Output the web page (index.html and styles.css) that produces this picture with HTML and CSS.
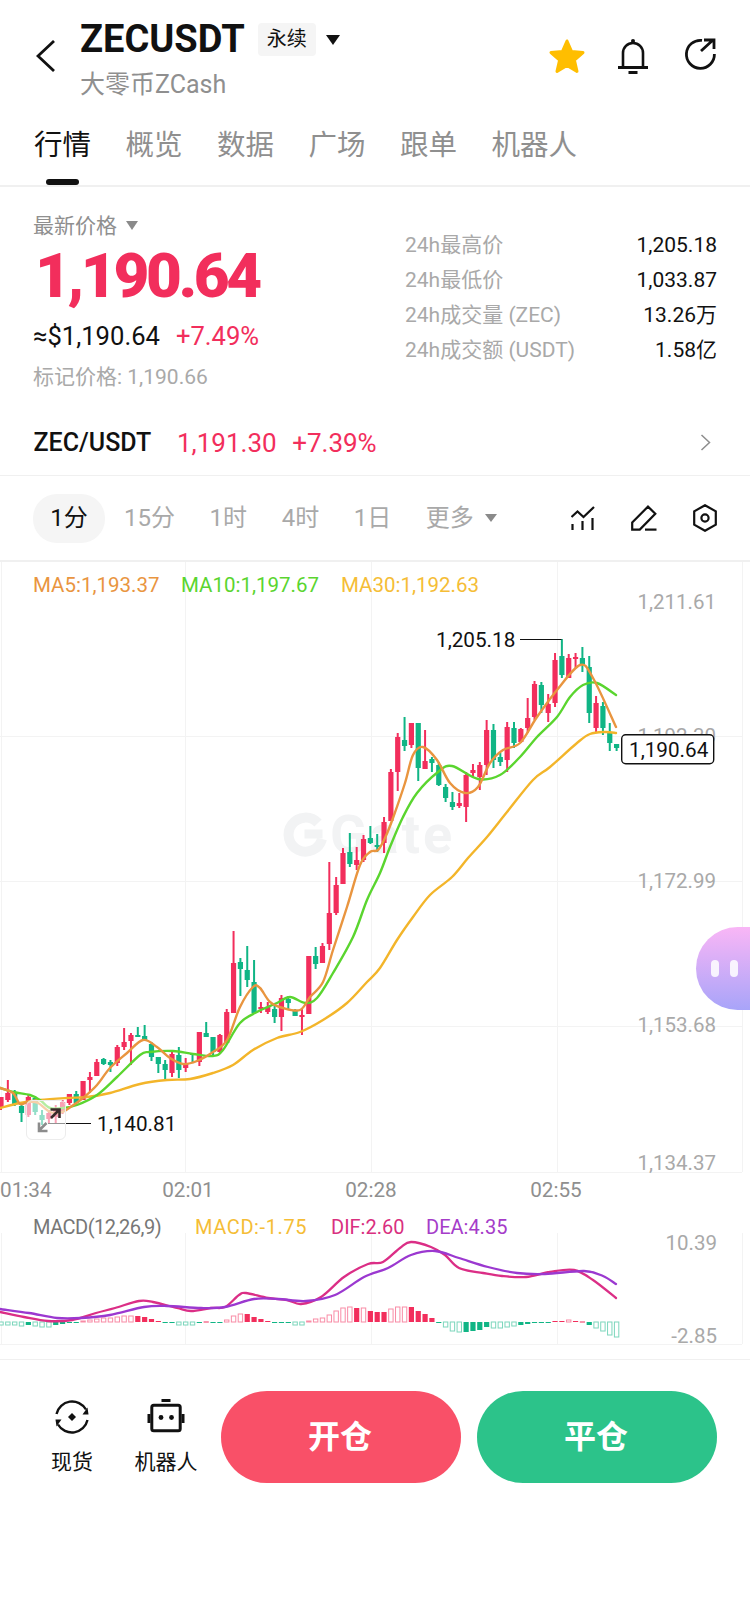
FILE: index.html
```html
<!DOCTYPE html>
<html lang="zh-CN">
<head>
    <meta charset="utf-8">
    <title>ZECUSDT</title>
    <link rel="stylesheet" href="styles.css">
</head>
<body>

<header class="topbar">
    <svg class="back" width="20" height="32" viewBox="0 0 20 32">
        <polyline points="18,1 2,16 18,31" fill="none" stroke="#111" stroke-width="2.8"/>
    </svg>
    <div class="symbol">
        <div class="symbol-row">
            <span class="symbol-name">ZECUSDT</span>
            <span class="badge">永续</span>
            <span class="tri tri-dark"></span>
        </div>
        <div class="symbol-sub">大零币ZCash</div>
    </div>
    <div class="top-icons">
        <svg width="38" height="36" viewBox="0 0 38 36">
            <polygon points="19,3 23.6,13.6 35,14.6 26.4,22.2 29,33.4 19,27.5 9,33.4 11.6,22.2 3,14.6 14.4,13.6" fill="#ffbe00" stroke="#ffbe00" stroke-width="3" stroke-linejoin="round"/>
        </svg>
        <svg class="bell" width="32" height="36" viewBox="0 0 32 36">
            <circle cx="16" cy="3" r="2" fill="#111"/>
            <path d="M6 29V15a10 10 0 0 1 20 0V29" fill="none" stroke="#111" stroke-width="2.6"/>
            <path d="M1 29.5H31" stroke="#111" stroke-width="3"/>
            <rect x="11.5" y="33" width="9" height="3" fill="#111"/>
        </svg>
        <svg width="32" height="32" viewBox="0 0 32 32">
            <path d="M18 2.4A14 14 0 1 0 30.4 16" fill="none" stroke="#111" stroke-width="2.8"/>
            <path d="M17 13L29 2M20 2H30V11" fill="none" stroke="#111" stroke-width="2.8"/>
        </svg>
    </div>
</header>

<nav class="tabs">
    <span class="tab active">行情</span>
    <span class="tab">概览</span>
    <span class="tab">数据</span>
    <span class="tab">广场</span>
    <span class="tab">跟单</span>
    <span class="tab">机器人</span>
</nav>

<section class="stats">
    <div class="stats-left">
        <div class="price-label">最新价格 <span class="tri tri-gray"></span></div>
        <div class="price">1,190.64</div>
        <div class="approx">≈$1,190.64<span class="up approx-pct">+7.49%</span></div>
        <div class="mark">标记价格: 1,190.66</div>
    </div>
    <div class="stats-right">
        <div class="stat-row"><span>24h最高价</span><b>1,205.18</b></div>
        <div class="stat-row"><span>24h最低价</span><b>1,033.87</b></div>
        <div class="stat-row"><span>24h成交量 (ZEC)</span><b>13.26万</b></div>
        <div class="stat-row"><span>24h成交额 (USDT)</span><b>1.58亿</b></div>
    </div>
</section>

<section class="pair">
    <span class="pair-name">ZEC/USDT</span>
    <span class="up pair-price">1,191.30</span>
    <span class="up pair-pct">+7.39%</span>
    <svg class="pair-arrow" width="11" height="17" viewBox="0 0 11 17">
        <polyline points="1.5,1 9.5,8.5 1.5,16" fill="none" stroke="#8d8d8d" stroke-width="1.5"/>
    </svg>
</section>

<section class="periods">
    <span class="period active">1分</span>
    <span class="period">15分</span>
    <span class="period">1时</span>
    <span class="period">4时</span>
    <span class="period">1日</span>
    <span class="period">更多</span>
    <span class="tri tri-gray"></span>
    <div class="tools">
        <svg width="24" height="24" viewBox="0 0 24 24" fill="none" stroke="#111" stroke-width="2.2">
            <polyline points="0.5,11 6.5,5.5 12.5,11 23,1"/>
            <path d="M1.5 18V24M11.5 15V24M21.5 12V24"/>
        </svg>
        <svg width="26" height="26" viewBox="0 0 26 26" fill="none" stroke="#111" stroke-width="2.2">
            <path d="M1.2 17.5L17 1.6 24.3 8.8 8.8 24.6H1.2Z"/>
            <path d="M14 24.6H25.5"/>
        </svg>
        <svg width="24" height="28" viewBox="0 0 24 28" fill="none" stroke="#111" stroke-width="2.2">
            <polygon points="12,1.2 22.8,7.4 22.8,20.6 12,26.8 1.2,20.6 1.2,7.4"/>
            <circle cx="12" cy="14" r="3.6"/>
        </svg>
    </div>
</section>

<section class="chart">
    <svg id="chart" class="chart-svg" width="750" height="797" viewBox="0 562 750 797">
        <g id="grid" stroke="#f3f3f3" stroke-width="1"></g>
        <g class="watermark">
            <path d="M318 823A17 17 0 1 0 322 839" fill="none" stroke-width="10"/>
            <rect x="305" y="830" width="17" height="8"/>
            <text x="330" y="853">Gate</text>
        </g>
        <g class="axis">
            <text x="716" y="609">1,211.61</text>
            <text x="716" y="743">1,192.30</text>
            <text x="716" y="888">1,172.99</text>
            <text x="716" y="1032">1,153.68</text>
            <text x="716" y="1170">1,134.37</text>
            <text x="717" y="1250">10.39</text>
            <text x="717" y="1343">-2.85</text>
        </g>
        <g id="candles"></g>
        <g id="lines" fill="none" stroke-width="2.4" stroke-linejoin="round" stroke-linecap="round"></g>
        <g id="hist"></g>
        <g id="macd" fill="none" stroke-width="2.3" stroke-linejoin="round" stroke-linecap="round"></g>

        <g class="legend">
            <text x="33" y="592" fill="#e9953f">MA5:1,193.37</text>
            <text x="181" y="592" fill="#5ad52f">MA10:1,197.67</text>
            <text x="341" y="592" fill="#f5bd36">MA30:1,192.63</text>
        </g>
        <g class="marker">
            <text x="436" y="647">1,205.18</text>
            <path d="M520 639.5H561.5" stroke="#111" stroke-width="1.2"/>
            <text x="97" y="1131">1,140.81</text>
            <path d="M48 1123.5H91" stroke="#111" stroke-width="1.2"/>
        </g>
        <rect class="price-tag" x="621.7" y="734.7" width="92" height="29" rx="4"/>
        <text class="price-tag-text" x="629" y="757">1,190.64</text>

        <g class="times">
            <text x="0" y="1197">01:34</text>
            <text x="188" y="1197" text-anchor="middle">02:01</text>
            <text x="371" y="1197" text-anchor="middle">02:28</text>
            <text x="556" y="1197" text-anchor="middle">02:55</text>
        </g>
        <g class="legend legend-macd">
            <text class="macd-name" x="33" y="1234" fill="#777">MACD(12,26,9)</text>
            <text class="macd-value" x="195" y="1234" fill="#f5bd36">MACD:-1.75</text>
            <text x="331" y="1234" fill="#d9307f">DIF:2.60</text>
            <text x="426" y="1234" fill="#a53cc9">DEA:4.35</text>
        </g>
    </svg>

    <div class="collapse">
        <svg width="26" height="26" viewBox="0 0 26 26">
            <path d="M9.5 16L2.5 23M2 15.5V24H10.5" fill="none" stroke="#8c8c8c" stroke-width="2.6"/>
            <path d="M14 11L22 3M13.5 2.5H22.5V11" fill="none" stroke="#3a2a2a" stroke-width="2.6"/>
        </svg>
    </div>
    <div class="bot-bubble"><i></i><i></i></div>
</section>

<footer class="actions">
    <div class="action">
        <svg width="36" height="36" viewBox="0 0 36 36" fill="none" stroke="#111" stroke-width="2.4">
            <path d="M2.5 15A16 16 0 0 1 32 10.5"/>
            <path d="M33.5 21A16 16 0 0 1 4 25.5"/>
            <path d="M28.5 15.5L34.5 15.5 33.5 8.5Z" fill="#111" stroke="none"/>
            <path d="M7.5 20.5L1.5 20.5 2.5 27.5Z" fill="#111" stroke="none"/>
            <path d="M18 14L22 18 18 22 14 18Z" fill="#111" stroke="none"/>
        </svg>
        <span>现货</span>
    </div>
    <div class="action action-bot">
        <svg width="38" height="36" viewBox="0 0 38 36">
            <rect x="14.5" y="0" width="9" height="3" fill="#111"/>
            <rect x="4.8" y="6.2" width="28.4" height="25.6" rx="2" fill="none" stroke="#111" stroke-width="3"/>
            <rect x="0.5" y="15" width="3" height="9" fill="#111"/>
            <rect x="34.5" y="15" width="3" height="9" fill="#111"/>
            <circle cx="14" cy="18.5" r="2.4" fill="#111"/>
            <circle cx="24.5" cy="18.5" r="2.4" fill="#111"/>
        </svg>
        <span>机器人</span>
    </div>
    <button class="btn btn-open">开仓</button>
    <button class="btn btn-close">平仓</button>
</footer>

<script src="chart.js"></script>
</body>
</html>
```

FILE: styles.css
```css
:root {
    --red: #f22e5c;
    --gray: #8f8f8f;
    --light: #a9a9a9;
    --line: #f0f0f0;
}

* {
    box-sizing: border-box;
}

html, body {
    margin: 0;
    padding: 0;
    background: #fff;
    color: #111;
    font-family: Roboto, "Noto Sans CJK SC", sans-serif;
}

body {
    width: 750px;
    height: 1604px;
    overflow: hidden;
    position: relative;
}

.up {
    color: var(--red);
}

.tri {
    display: inline-block;
    width: 0;
    height: 0;
    border-style: solid;
    border-color: transparent;
    border-bottom-width: 0;
}

.tri-dark {
    border-width: 10px 7px 0;
    border-top-color: #111;
    margin-left: 10px;
}

.tri-gray {
    border-width: 9px 6px 0;
    border-top-color: #8a8a8a;
}

/* top bar */
.topbar {
    height: 112px;
    display: flex;
    padding-left: 36px;
    position: relative;
}

.back {
    margin-top: 40px;
    flex: none;
}

.symbol {
    margin-left: 24px;
    padding-top: 20px;
}

.symbol-row {
    display: flex;
    align-items: center;
    height: 39px;
}

.symbol-name {
    font-size: 38px;
    font-weight: 700;
    line-height: 39px;
}

.badge {
    margin-left: 13px;
    width: 58px;
    height: 33px;
    background: #f5f5f5;
    border-radius: 4px;
    font-size: 20px;
    line-height: 33px;
    text-align: center;
}

.symbol-sub {
    margin-top: 11px;
    font-size: 25px;
    line-height: 30px;
    color: var(--gray);
}

.top-icons {
    margin-left: auto;
    margin-top: 38px;
    padding-right: 34px;
    display: flex;
    align-items: flex-start;
    gap: 33px;
}

.bell {
    margin: 0 2px 0 -2px;
}

/* tabs */
.tabs {
    height: 75px;
    padding: 16px 0 0 34px;
    display: flex;
    gap: 34.5px;
    border-bottom: 2px solid var(--line);
}

.tab {
    position: relative;
    font-size: 28.5px;
    line-height: 36px;
    height: 36px;
    color: var(--gray);
}

.tab.active {
    color: #111;
}

.tab.active::after {
    content: "";
    position: absolute;
    left: 12px;
    top: 51px;
    width: 33px;
    height: 6px;
    border-radius: 3px;
    background: #111;
}

/* price block */
.stats {
    height: 223px;
    padding: 24px 33px 0 33px;
    display: flex;
    justify-content: space-between;
}

.price-label {
    font-size: 21px;
    line-height: 30px;
    color: var(--gray);
}

.price-label .tri {
    margin-left: 4px;
    vertical-align: 3px;
}

.price {
    margin-left: 2px;
    font-size: 62px;
    font-weight: 900;
    letter-spacing: -3.4px;
    line-height: 70px;
    color: var(--red);
}

.approx {
    margin-top: 7px;
    font-size: 25.6px;
    line-height: 36px;
}

.approx-pct {
    margin-left: 16px;
}

.mark {
    margin-top: 8px;
    font-size: 21px;
    line-height: 30px;
    color: var(--light);
}

.stats-right {
    width: 312px;
    padding-top: 17px;
}

.stat-row {
    display: flex;
    justify-content: space-between;
    height: 35px;
    line-height: 35px;
    font-size: 21px;
}

.stat-row span {
    color: var(--light);
}

.stat-row b {
    font-weight: 400;
}

/* spot pair row */
.pair {
    height: 66px;
    padding: 0 39px 0 33.5px;
    display: flex;
    align-items: center;
    font-size: 26px;
    border-bottom: 1.5px solid var(--line);
}

.pair-name {
    width: 143.5px;
    font-size: 25px;
    font-weight: 500;
}

.pair-pct {
    margin-left: 15.5px;
}

.pair-arrow {
    margin-left: auto;
}

/* period picker */
.periods {
    height: 86px;
    padding: 0 33px;
    display: flex;
    align-items: center;
    gap: 34.6px;
    border-bottom: 2px solid var(--line);
}

.period {
    font-size: 24px;
    line-height: 34px;
    color: var(--light);
}

.period.active {
    width: 72px;
    height: 49px;
    margin-right: -15.6px;
    border-radius: 24px;
    background: #f5f5f5;
    line-height: 49px;
    text-align: center;
    color: #111;
}

.periods .tri {
    margin-left: -23.6px;
    border-width: 8px 6.5px 0;
}

.tools {
    margin-left: auto;
    display: flex;
    align-items: center;
    gap: 36px;
}

/* chart */
.chart {
    position: relative;
    height: 798px;
    border-bottom: 1.5px solid var(--line);
}

.chart-svg {
    display: block;
}

.chart-svg text {
    font-family: Roboto, sans-serif;
}

.watermark {
    fill: #f2f3f4;
    stroke: #f2f3f4;
}

.watermark text {
    stroke: none;
    font-size: 54px;
    font-weight: 700;
    letter-spacing: 3px;
}

.axis text {
    font-size: 20.5px;
    fill: var(--light);
    text-anchor: end;
}

.legend text {
    font-size: 20.5px;
}

.legend-macd text {
    font-size: 20px;
}

.legend-macd .macd-name {
    letter-spacing: -0.5px;
}

.legend-macd .macd-value {
    letter-spacing: 0.6px;
}

.marker text, .price-tag-text {
    font-size: 20.7px;
    fill: #111;
}

.price-tag {
    fill: #fff;
    stroke: #111;
    stroke-width: 1.4;
}

.times text {
    font-size: 20.7px;
    fill: var(--gray);
}

.collapse {
    position: absolute;
    left: 26px;
    top: 538px;
    width: 40px;
    height: 40px;
    padding: 7px;
    border: 1.5px solid #ececec;
    border-radius: 6px;
    background: rgba(255, 255, 255, 0.55);
}

.collapse svg {
    display: block;
    margin: -1px 0 0 3px;
}

.bot-bubble {
    position: absolute;
    right: 0;
    top: 365px;
    width: 54px;
    height: 83px;
    padding-left: 15px;
    display: flex;
    align-items: center;
    gap: 11px;
    border-radius: 42px 0 0 42px;
    background: linear-gradient(#f9b6f6, #a8a4f9);
}

.bot-bubble i {
    width: 8px;
    height: 17px;
    border-radius: 4px;
    background: rgba(255, 255, 255, 0.85);
}

/* bottom actions */
.actions {
    display: flex;
    align-items: flex-start;
    padding: 31px 33px 0 0;
}

.action {
    width: 40px;
    margin-left: 52px;
    display: flex;
    flex-direction: column;
    align-items: center;
    padding-top: 8px;
    font-size: 21px;
    line-height: 30px;
    white-space: nowrap;
}

.action span {
    margin-top: 12px;
}

.action svg {
    flex: none;
}

.action-bot {
    margin-left: 54px;
}

.btn {
    flex: none;
    width: 240px;
    height: 92px;
    padding: 0 2px 6px 0;
    border: 0;
    border-radius: 46px;
    color: #fff;
    font-family: inherit;
    font-size: 32px;
    font-weight: 700;
}

.btn-open {
    margin-left: 35px;
    background: #f95068;
}

.btn-close {
    margin-left: 16px;
    background: #2cc38a;
}
```

FILE: chart.js
```js
// Candles are [bodyTop, bodyBottom, high, low, isUp], already in page pixels
const CANDLES = [
    [1097,1107,1097,1110,1],[1093,1100,1080,1102,1],[1093,1105,1090,1106,0],[1106,1113,1102,1122,0],
    [1097,1115,1095,1117,1],[1098,1112,1096,1115,0],[1115,1120,1110,1125,0],[1113,1119,1110,1123,1],
    [1108,1117,1105,1123,1],[1102,1112,1100,1114,1],[1094,1103,1094,1105,1],[1094,1103,1091,1105,0],
    [1081,1100,1081,1100,1],[1077,1080,1072,1093,1],[1062,1076,1059,1076,1],[1059,1064,1058,1065,0],
    [1062,1065,1060,1072,0],[1047,1063,1045,1066,1],[1042,1047,1028,1050,1],[1035,1041,1033,1065,1],
    [1035,1037,1027,1037,0],[1036,1041,1025,1041,0],[1044,1057,1042,1061,0],[1057,1064,1057,1073,0],
    [1064,1070,1060,1080,0],[1054,1073,1050,1077,1],[1055,1070,1047,1078,0],[1063,1068,1058,1072,1],
    [1053,1055,1053,1063,0],[1032,1062,1032,1066,1],[1033,1037,1022,1037,0],[1037,1052,1037,1055,0],
    [1035,1052,1034,1053,1],[1012,1043,1009,1043,1],[963,1013,931,1013,1],[962,969,958,996,0],
    [970,980,946,987,0],[982,1013,960,1013,0],[1007,1009,1002,1013,1],[1007,1012,1002,1014,1],
    [1009,1017,1003,1023,0],[998,1017,995,1031,1],[999,1003,996,1010,0],[1010,1016,1009,1016,0],
    [1015,1017,1008,1035,1],[956,1014,956,1014,1],[956,964,947,969,0],[946,963,943,963,1],
    [913,944,862,950,1],[885,913,877,915,1],[853,884,848,884,1],[852,864,833,867,0],
    [860,865,847,870,1],[839,860,835,862,1],[838,843,826,844,0],[845,847,834,852,0],
    [822,843,817,853,1],[772,821,769,821,1],[737,772,733,791,1],[740,746,717,751,0],
    [723,745,723,748,1],[723,768,723,781,0],[761,769,730,769,1],[759,763,757,772,0],
    [765,785,762,786,0],[787,798,784,802,0],[802,807,792,810,0],[803,806,793,808,1],
    [775,807,772,822,1],[770,773,764,778,1],[765,777,762,790,1],[730,765,720,775,1],
    [730,760,724,768,0],[757,762,753,766,0],[727,760,722,772,1],[728,743,722,748,0],
    [729,742,728,743,1],[718,728,698,733,1],[684,717,681,720,1],[685,705,682,713,0],
    [704,713,694,722,1],[660,703,653,707,1],[656,675,639,678,0],[658,678,654,678,1],
    [657,659,653,668,1],[658,665,647,672,0],[667,713,656,723,0],[703,728,696,733,1],
    [706,728,702,735,0],[733,743,723,751,0],[744,748,744,751,0]
];

const MA5 = [[0,1088],[13,1093],[20,1104],[28,1102],[38,1103],[50,1112],[62,1112],[72,1106],[83,1098],[97,1085],[110,1068],[127,1053],[143,1040],[157,1047],[170,1058],[183,1064],[197,1061],[213,1052],[227,1040],[240,1007],[253,987],[260,988],[270,1002],[283,1008],[300,1010],[310,997],[323,982],[333,950],[347,907],[360,865],[370,852],[378,850],[385,838],[393,818],[405,783],[413,755],[423,747],[437,760],[450,783],[465,793],[478,787],[490,763],[503,750],[520,743],[537,717],[557,690],[580,665],[593,678],[616,727]];
const MA10 = [[0,1088],[13,1092],[30,1095],[40,1100],[50,1108],[63,1108],[77,1105],[97,1095],[117,1077],[140,1055],[150,1052],[173,1051],[193,1054],[213,1056],[223,1050],[240,1023],[257,1012],[277,1003],[290,997],[305,1003],[317,998],[333,973],[353,937],[367,900],[380,873],[390,847],[403,817],[417,793],[438,772],[452,766],[478,779],[500,775],[520,757],[537,737],[557,717],[570,697],[583,685],[597,683],[616,695]];
const MA30 = [[0,1108],[20,1103],[40,1100],[67,1098],[87,1097],[110,1093],[140,1084],[167,1080],[190,1079],[213,1073],[233,1065],[253,1050],[277,1038],[300,1032],[323,1020],[347,1003],[367,982],[380,968],[397,940],[413,917],[430,895],[452,877],[468,858],[487,837],[507,812],[533,780],[550,767],[577,743],[590,734],[605,732],[616,733]];

const DIF = [[0,1312],[24,1317],[48,1321],[72,1320],[96,1313],[115,1308],[139,1301],[153,1302],[177,1308],[191,1311],[211,1308],[225,1307],[239,1295],[246,1293],[268,1298],[287,1300],[301,1304],[321,1297],[344,1277],[368,1264],[383,1262],[400,1248],[411,1242],[431,1247],[445,1255],[459,1268],[483,1273],[502,1276],[526,1277],[550,1272],[574,1270],[593,1280],[616,1298]];
const DEA = [[0,1309],[29,1313],[57,1318],[81,1318],[110,1315],[144,1307],[167,1306],[201,1308],[225,1307],[254,1299],[278,1299],[306,1301],[335,1295],[364,1277],[388,1268],[411,1255],[435,1251],[459,1258],[488,1267],[517,1273],[545,1274],[584,1271],[603,1276],[616,1284]];

const HIST = [-3,-3,-3,-4,-3,-4,-5,-5,-3,-2,-1,-1,1,2,3,4,4,5,6,6,6,5,3,1,-1,-1,-3,-3,-3,-1,.5,-.5,-.5,2,6,8,8,5,3,1,-.5,-.5,-1,-3,-3,1,3,4,7,11,14,15,14,14,11,10,10,13,15,15,15,11,8,4,-1,-5,-9,-10,-10,-9,-8,-5,-6,-6,-5,-4,-3,-2,-.5,-1,-1,1,1,2,1,.5,-3,-6,-9,-13,-15];
const HOLLOW = [0,1,2,3,5,6,7,12,13,14,15,16,17,18,19,26,27,28,33,34,35,43,44,45,46,47,48,49,50,51,53,57,58,59,65,66,67,72,73,74,75,83,87,88,89,90];

const UP = "#f22e5c", DOWN = "#10b585";
const NS = "http://www.w3.org/2000/svg";
const STEP = 6.84;

function add(parent, tag, attrs) {
    const el = document.createElementNS(NS, tag);
    Object.keys(attrs).forEach(key => el.setAttribute(key, attrs[key]));
    parent.appendChild(el);
}

// Catmull-Rom through the points so the averages don't look like polylines
function smooth(pts) {
    let d = "M" + pts[0].join(" ");
    for (let i = 0; i < pts.length - 1; i++) {
        const p0 = pts[Math.max(i - 1, 0)], p1 = pts[i], p2 = pts[i + 1];
        const p3 = pts[Math.min(i + 2, pts.length - 1)];
        const c1 = [p1[0] + (p2[0] - p0[0]) / 6, p1[1] + (p2[1] - p0[1]) / 6];
        const c2 = [p2[0] - (p3[0] - p1[0]) / 6, p2[1] - (p3[1] - p1[1]) / 6];
        d += "C" + [c1[0].toFixed(1), c1[1].toFixed(1), c2[0].toFixed(1), c2[1].toFixed(1), p2[0], p2[1]].join(" ");
    }
    return d;
}

const grid = document.getElementById("grid");
[736.5, 881.5, 1026.5, 1172.5, 1344.5].forEach(y => add(grid, "line", {x1: 0, x2: 742, y1: y, y2: y}));
[1.5, 185.5, 371.5, 557.5, 742.5].forEach(x => {
    add(grid, "line", {x1: x, x2: x, y1: 562, y2: 1172});
    add(grid, "line", {x1: x, x2: x, y1: 1233, y2: 1344});
});

const candles = document.getElementById("candles");
CANDLES.forEach((c, i) => {
    const x = 1 + STEP * i;
    const color = c[4] ? UP : DOWN;
    add(candles, "rect", {x: x - 1, y: c[2], width: 2, height: c[3] - c[2], fill: color});
    add(candles, "rect", {x: x - 2.6, y: c[0], width: 5.2, height: c[1] - c[0], fill: color});
});

const lines = document.getElementById("lines");
add(lines, "path", {d: smooth(MA30), stroke: "#f3b52a"});
add(lines, "path", {d: smooth(MA10), stroke: "#5ad52f"});
add(lines, "path", {d: smooth(MA5), stroke: "#e9953f"});

const hist = document.getElementById("hist");
const ZERO = 1322;
HIST.forEach((v, i) => {
    const x = 1 + STEP * i;
    const color = v > 0 ? UP : DOWN;
    const top = v > 0 ? ZERO - v : ZERO;
    const h = Math.abs(v);
    if (HOLLOW.includes(i)) {
        add(hist, "rect", {x: x - 2.2, y: top, width: 4.4, height: h, fill: "#fff", stroke: color, "stroke-width": 1, "stroke-opacity": .55});
    } else {
        add(hist, "rect", {x: x - 2.6, y: top, width: 5.2, height: Math.max(h, 1), fill: color});
    }
});

const macd = document.getElementById("macd");
add(macd, "path", {d: smooth(DIF), stroke: "#db2e86"});
add(macd, "path", {d: smooth(DEA), stroke: "#9b38d0"});
```
